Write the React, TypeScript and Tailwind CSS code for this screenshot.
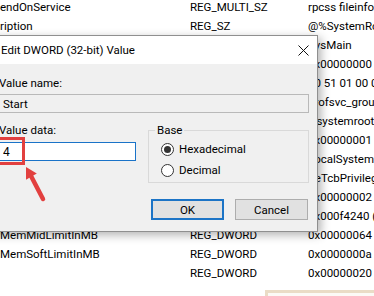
import { useState } from "react";

// Registry editor rows behind the dialog. The first two names and the bottom ones
// are clipped by the window edge, so only their visible tails are written here.
const ROWS = [
  { name: "endOnService", type: "REG_MULTI_SZ", data: "rpcss fileinfo" },
  { name: "ription", type: "REG_SZ", data: "@%SystemRoot%\\system32\\sysmain.dll,-1001" },
  { name: "DisplayName", type: "REG_SZ", data: "SysMain" },
  { name: "ErrorControl", type: "REG_DWORD", data: "0x00000000 (0)" },
  { name: "FailureActions", type: "REG_BINARY", data: "80 51 01 00 00 00 00 00 00 00 00 00" },
  { name: "Group", type: "REG_SZ", data: "profsvc_group" },
  { name: "ImagePath", type: "REG_EXPAND_SZ", data: "%systemroot%\\system32\\svchost.exe -k LocalSystemNetworkRestricted -p" },
  { name: "LaunchProtected", type: "REG_DWORD", data: "0x00000001 (1)" },
  { name: "ObjectName", type: "REG_SZ", data: "LocalSystem" },
  { name: "RequiredPrivileges", type: "REG_MULTI_SZ", data: "SeTcbPrivilege SeProfileSingleProcessPrivilege" },
  { name: "ServiceSidType", type: "REG_DWORD", data: "0x00000002 (2)" },
  { name: "MemMaxLimitInKB", type: "REG_DWORD", data: "0x000f4240 (1000000)" },
  { name: "MemMidLimitInMB", type: "REG_DWORD", data: "0x00000064 (100)" },
  { name: "MemSoftLimitInMB", type: "REG_DWORD", data: "0x0000000a (10)" },
  { name: "", type: "REG_DWORD", data: "0x00000020 (32)" },
];

function Radio({ checked, label }: { checked: boolean; label: string }) {
  return (
    <label className="flex h-[16px] items-center gap-[5px]">
      <span className="grid h-[13px] w-[13px] place-items-center rounded-full border border-[#333] bg-white">
        {checked && <span className="h-[7px] w-[7px] rounded-full bg-[#333]" />}
      </span>
      <span>{label}</span>
    </label>
  );
}

export default function App() {
  const [value, setValue] = useState("4");
  const [hex, setHex] = useState(true);

  return (
    <div
      className="relative h-[296px] w-[374px] overflow-hidden bg-white text-[11.5px] leading-[16px] text-black"
      style={{ fontFamily: "Roboto, 'Liberation Sans', sans-serif" }}
    >
      {/* value list */}
      <div className="mt-[-3px] flex flex-col">
        {ROWS.map((r, i) => (
          <div
            key={i}
            className="grid h-[19px] grid-cols-[190px_118px_1fr] items-center whitespace-nowrap"
          >
            <span>{r.name}</span>
            <span>{r.type}</span>
            <span>{r.data}</span>
          </div>
        ))}
      </div>

      {/* another window peeking in at the bottom right */}
      <div className="absolute left-[265px] top-[290px] h-[20px] w-[120px] border-[3px] border-[#eadcc6] bg-[#fcfaf6]" />

      {/* Edit DWORD dialog */}
      <div className="absolute left-[-14px] top-[35px] flex h-[197px] w-[332px] flex-col border border-[#8f8f8f] bg-[#f0f0f0] shadow-[3px_3px_9px_rgba(0,0,0,0.3)]">
        <div className="flex h-[28px] shrink-0 items-center justify-between bg-white pl-[14px] pr-[8px]">
          <span>Edit DWORD (32-bit) Value</span>
          <svg width="11" height="11" viewBox="0 0 11 11" aria-hidden="true">
            <path d="M0.5 0.5 L10.5 10.5 M10.5 0.5 L0.5 10.5" stroke="#111" strokeWidth="1" />
          </svg>
        </div>

        <div className="flex flex-col pl-[12px] pr-[8px] pt-[11px]">
          <span>Value name:</span>
          <div className="-ml-[2px] mt-[3px] flex h-[19px] items-center border border-[#b9b9b9] bg-[#f0f0f0] pl-[5px]">
            Start
          </div>

          <div className="mt-[9px] flex gap-[12px]">
            <div className="flex w-[137px] flex-col">
              <span>Value data:</span>
              <input
                value={value}
                onChange={(e) => setValue(e.target.value)}
                className="-ml-[2px] mt-[4px] h-[19px] w-[139px] border border-[#1a73c8] bg-white pl-[5px] text-[12px] outline-none"
              />
            </div>

            <fieldset className="h-[61px] w-[162px] border border-[#d9d9d9] p-0">
              <legend className="ml-[6px] px-[2px] leading-[16px]">Base</legend>
              <div className="flex flex-col gap-[5px] pl-[12px] pt-[3px]">
                <div onClick={() => setHex(true)}>
                  <Radio checked={hex} label="Hexadecimal" />
                </div>
                <div onClick={() => setHex(false)}>
                  <Radio checked={!hex} label="Decimal" />
                </div>
              </div>
            </fieldset>
          </div>

          <div className="mr-[1px] mt-[16px] flex justify-end gap-[11px]">
            <button
              type="button"
              className="h-[21px] w-[73px] border-2 border-[#1c74c6] bg-[#e1e1e1]"
            >
              OK
            </button>
            <button
              type="button"
              className="h-[21px] w-[73px] border border-[#adadad] bg-[#e1e1e1]"
            >
              Cancel
            </button>
          </div>
        </div>
      </div>

      {/* red annotation box + arrow */}
      <div className="absolute left-[-5px] top-[137px] h-[28px] w-[30px] border-[3px] border-[#e2403f]" />
      <svg
        className="absolute left-[20px] top-[160px]"
        width="30"
        height="45"
        viewBox="0 0 30 45"
        aria-hidden="true"
      >
        <path d="M23 39 L11 16" stroke="#e2403f" strokeWidth="4.5" strokeLinecap="round" />
        <polygon points="6,7 16.8,13.6 6,19.8" fill="#e2403f" />
      </svg>
    </div>
  );
}
